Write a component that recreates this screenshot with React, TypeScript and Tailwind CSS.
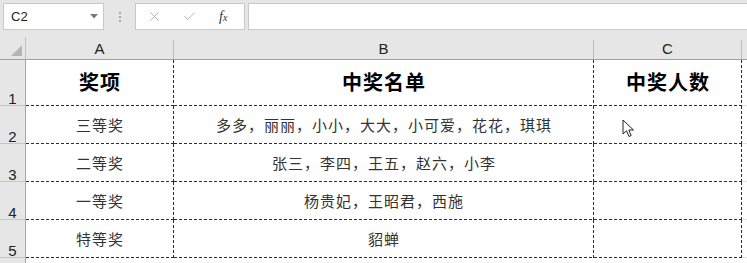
import { X, Check } from "lucide-react";

const ROWS = [
  { n: 2, a: "三等奖", b: "多多，丽丽，小小，大大，小可爱，花花，琪琪" },
  { n: 3, a: "二等奖", b: "张三，李四，王五，赵六，小李" },
  { n: 4, a: "一等奖", b: "杨贵妃，王昭君，西施" },
  { n: 5, a: "特等奖", b: "貂蝉" },
];

// dashed navy right + bottom edges, Excel style
const dashed =
  "bg-[repeating-linear-gradient(90deg,#1c1ca6_0_3px,transparent_3px_5px),repeating-linear-gradient(180deg,#1c1ca6_0_3px,transparent_3px_5px)] bg-[length:100%_1px,1px_100%] bg-[position:left_bottom,right_top] bg-no-repeat";

function Cell({ w, children, pad }: { w: number; children?: React.ReactNode; pad?: boolean }) {
  return (
    <div
      className={
        (w === 420 ? "w-[420px] " : "w-[148px] ") +
        (pad ? "pt-[2px] " : "") +
        "flex items-center justify-center " +
        dashed
      }
    >
      {children}
    </div>
  );
}

function RowHead({ n }: { n: number }) {
  return (
    <div className="w-[26px] border-r border-b border-r-[#a8a8a8] border-b-[#c6c6c6] flex items-end justify-center leading-[13px] text-[15px] text-[#222]">
      {n}
    </div>
  );
}

export default function App() {
  return (
    <div className="w-[747px] h-[263px] overflow-hidden bg-[#e6e6e6] relative font-['Liberation_Sans','Noto_Sans_CJK_SC',sans-serif]">
      {/* formula bar */}
      <div className="h-[37px] flex items-start pt-[3px] pl-[3px] gap-[3px]">
        <div className="w-[101px] h-[27px] bg-white border border-[#c8c8c8] flex items-center justify-between pl-[7px] pr-[5px] text-[13px] text-[#222]">
          <span>C2</span>
          <svg width="8" height="5" viewBox="0 0 8 5">
            <path d="M0 0 H8 L4 4.5 Z" fill="#7a7a7a" />
          </svg>
        </div>
        <div className="w-[25px] h-[27px] flex flex-col items-center justify-center gap-[2px]">
          <span className="w-[2px] h-[2px] bg-[#a8a8a8]" />
          <span className="w-[2px] h-[2px] bg-[#a8a8a8]" />
          <span className="w-[2px] h-[2px] bg-[#a8a8a8]" />
        </div>
        <div className="w-[110px] h-[27px] bg-white border border-[#c8c8c8] flex items-center pl-[11px] text-[#a9a9a9]">
          <X size={15} strokeWidth={1.4} />
          <Check size={15} strokeWidth={1.4} className="ml-[20px]" />
          <span className="ml-[22px] text-[#333] italic text-[14px] font-['Liberation_Serif',serif] leading-none">
            f<span className="text-[10px]">x</span>
          </span>
        </div>
        <div className="flex-1 h-[27px] bg-white border border-[#c8c8c8] border-r-0" />
      </div>

      {/* column header */}
      <div className="h-[23px] flex border-b border-[#a0a0a0] text-[15px] text-[#222]">
        <div className="w-[26px] flex items-end justify-end pr-[3px] pb-[3px] border-r border-[#c0c0c0]">
          <svg width="11" height="11" viewBox="0 0 11 11">
            <path d="M11 0 V11 H0 Z" fill="#b4b4b4" />
          </svg>
        </div>
        <div className="w-[148px] flex items-center justify-center border-r border-[#bcbcbc] mt-[3px]">A</div>
        <div className="w-[420px] flex items-center justify-center border-r border-[#bcbcbc] mt-[3px]">B</div>
        <div className="w-[148px] flex items-center justify-center border-r border-[#bcbcbc] mt-[3px]">C</div>
        <div className="flex-1" />
      </div>

      {/* row 1 */}
      <div className="h-[46px] flex">
        <RowHead n={1} />
        <div className="flex bg-white text-[20px] font-bold text-black tracking-[1px]">
          <Cell w={148}>奖项</Cell>
          <Cell w={420}>中奖名单</Cell>
          <Cell w={148}>中奖人数</Cell>
        </div>
        <div className="flex-1 bg-white border-b border-[#e2e2e2]" />
      </div>

      {ROWS.map((r) => (
        <div key={r.n} className="h-[38px] flex">
          <RowHead n={r.n} />
          <div className="flex bg-white text-[15px] text-[#333] tracking-[1px]">
            <Cell w={148} pad>{r.a}</Cell>
            <Cell w={420} pad>{r.b}</Cell>
            <Cell w={148} />
          </div>
          <div className="flex-1 bg-white border-b border-[#e2e2e2]" />
        </div>
      ))}

      <div className="h-[10px] flex">
        <div className="w-[26px] border-r border-[#a8a8a8]" />
        <div className="flex-1 bg-white" />
      </div>

      {/* mouse pointer */}
      <svg className="absolute left-[622px] top-[119px]" width="14" height="20" viewBox="0 0 14 20">
        <path d="M1 1 L1 15 L4.5 11.8 L7 17.5 L9.2 16.5 L6.8 11 L11.5 11 Z" fill="white" stroke="#222" strokeWidth="1" strokeLinejoin="round" />
      </svg>
    </div>
  );
}
